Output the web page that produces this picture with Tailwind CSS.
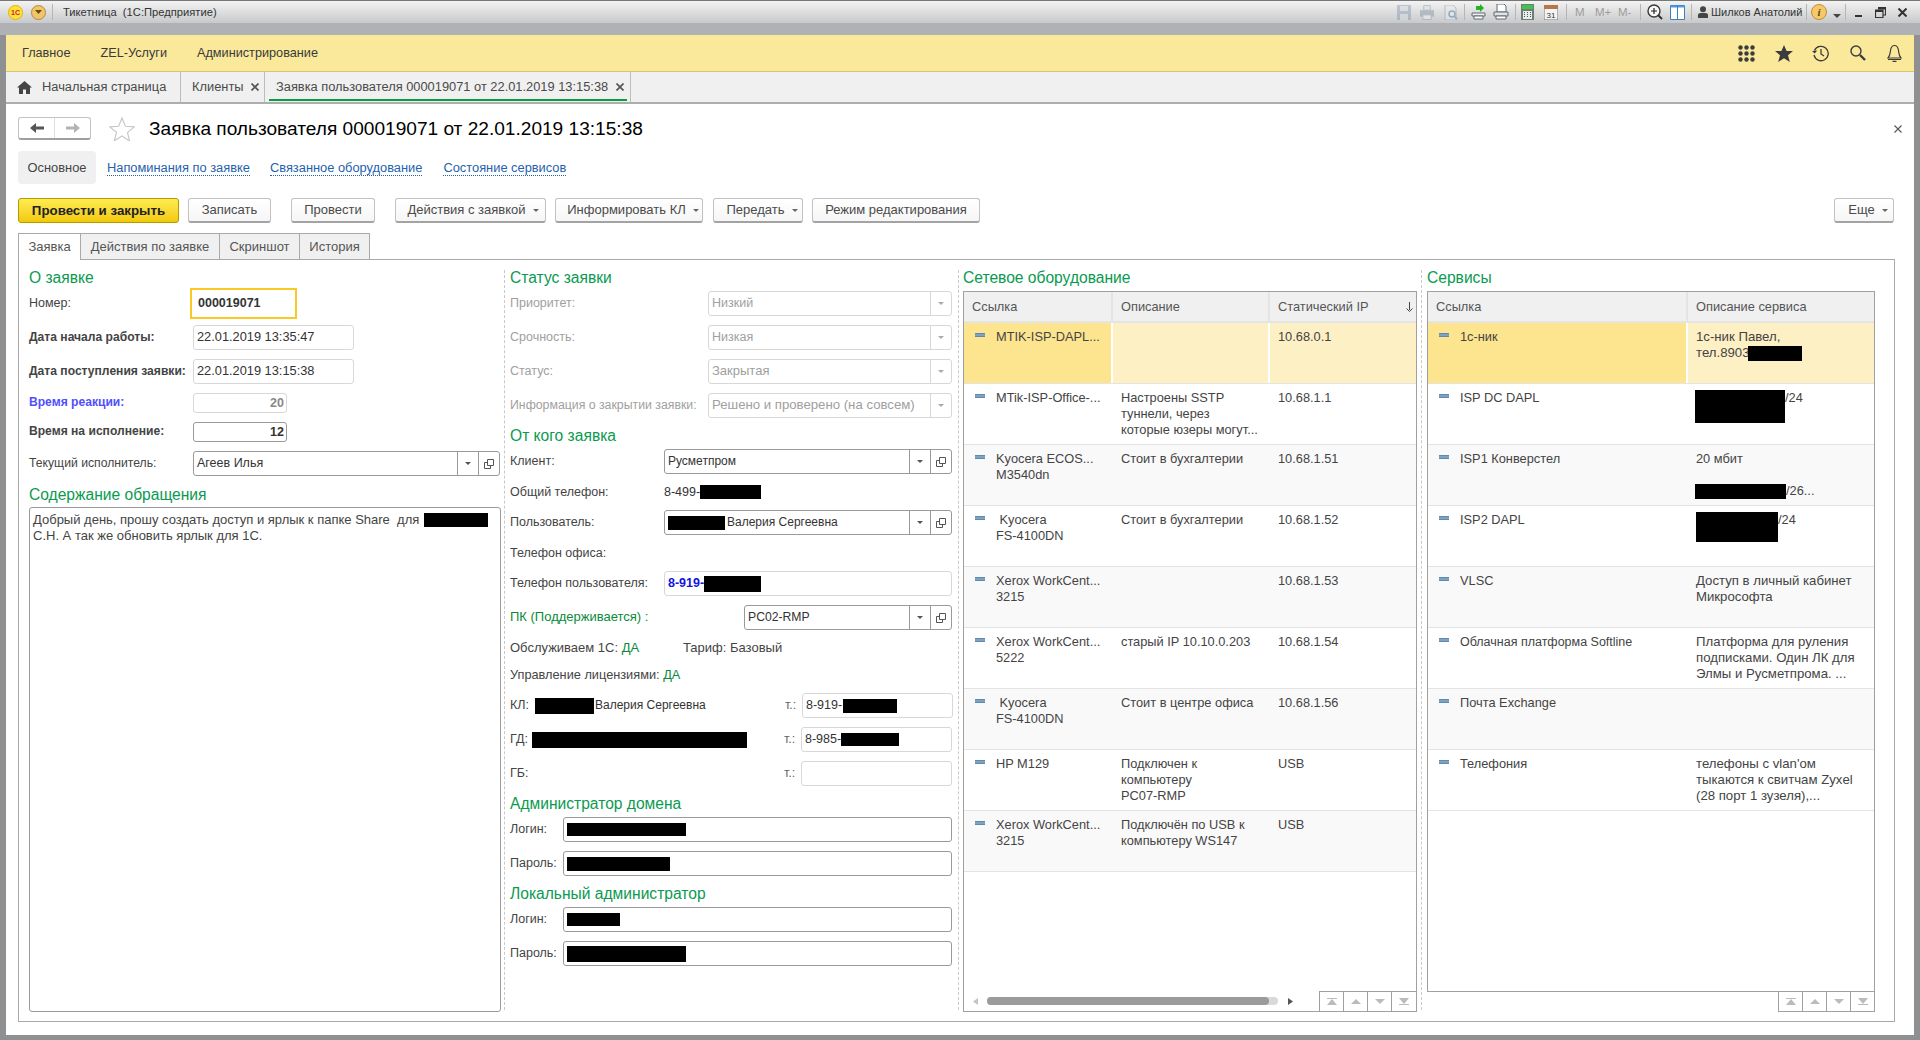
<!DOCTYPE html>
<html lang="ru">
<head>
<meta charset="UTF-8">
<title>Тикетница (1С:Предприятие)</title>
<script src="https://cdn.jsdelivr.net/npm/@tailwindcss/browser@4"></script>
</head>
<body class="w-[1920px] h-[1040px] overflow-hidden bg-[#8f9092] font-['Liberation_Sans',Arial,sans-serif] text-[12.5px] leading-[16px] text-[#444]">

<!-- Window title bar -->
<div class="h-[35px] border-t border-[#777] bg-[#b0b1b4] shrink-0">
  <div class="h-[22px] px-[6px] bg-gradient-to-b from-[#f3f3f3] to-[#c8c9cb] flex items-center text-[#333]">
    <div class="ml-[2px] w-[15px] h-[15px] rounded-full bg-[#ffe23d] border border-[#e2b500] flex items-center justify-center text-[7px] font-bold text-[#d3201f] leading-none">1С</div>
    <div class="ml-[8px] w-[15px] h-[15px] rounded-full bg-[#f0c56c] border border-[#b58a35] flex items-center justify-center">
      <svg width="7" height="4" viewBox="0 0 7 4"><path d="M0 0h7L3.500 4z" fill="#6b4a10"/></svg>
    </div>
    <div class="ml-[6px] w-px h-[16px] bg-[#b5b5b5]"></div>
    <div class="ml-[10px] text-[11.200px] whitespace-pre">Тикетница  (1С:Предприятие)</div>

    <div class="ml-auto flex items-center">
      <svg class="opacity-50" width="14" height="15" viewBox="0 0 14 15"><path d="M0 0h14v15H0z" fill="#8fa1b3"/><path d="M3 1h8v5H3zM3 9h8v6H3z" fill="#cfd8e0"/></svg>
      <svg class="ml-[9px] opacity-50" width="14" height="15" viewBox="0 0 15 15"><path d="M4 0h7v5H4z" fill="#dde3e8" stroke="#8b99a6"/><path d="M0 5h15v7H0z" fill="#8b99a6"/><path d="M3 10h9v5H3z" fill="#eef1f3" stroke="#8b99a6"/></svg>
      <svg class="ml-[10px] opacity-60" width="14" height="15" viewBox="0 0 14 15"><path d="M1 0h8l3 3v12H1z" fill="#e4e9ee" stroke="#93a4b3"/><circle cx="8" cy="9" r="3" fill="none" stroke="#6e8aa0" stroke-width="1.500"/><path d="M10 11l3 3" stroke="#6e8aa0" stroke-width="1.500"/></svg>
      <div class="ml-[6px] w-px h-[16px] bg-[#b5b5b5]"></div>
      <svg class="ml-[6px]" width="15" height="16" viewBox="0 0 15 16"><path d="M5 2h4V0l4 4-4 4V6H5z" fill="#27b224"/><path d="M1 9h13v3H1z" fill="#eef0f2" stroke="#5f6b75"/><path d="M3 12h9v3H3z" fill="#fff" stroke="#5f6b75"/></svg>
      <svg class="ml-[7px]" width="16" height="16" viewBox="0 0 16 16"><path d="M4 0h7l2 2v6H4z" fill="#fff" stroke="#5f6b75"/><path d="M1 8h14v4H1z" fill="#dfe3e6" stroke="#5f6b75"/><path d="M3 12h10v3H3z" fill="#fff" stroke="#5f6b75"/></svg>
      <div class="ml-[6px] w-px h-[16px] bg-[#b5b5b5]"></div>
      <svg class="ml-[5px]" width="13" height="16" viewBox="0 0 13 16"><path d="M0 0h13v16H0z" fill="#6d7f72"/><path d="M1 1h11v4H1z" fill="#3fc44f"/><path d="M2 7h9v8H2z" fill="#e8ecea"/><path d="M3 8h1v1H3zm3 0h1v1H6zm3 0h1v1H9zM3 10h1v1H3zm3 0h1v1H6zm3 0h1v1H9zM3 12h1v1H3zm3 0h1v1H6zm3 0h1v1H9z" fill="#555"/></svg>
      <svg class="ml-[10px]" width="14" height="16" viewBox="0 0 14 16"><path d="M0 2h14v14H0z" fill="#f4f4f4" stroke="#7c6a5a"/><path d="M0 1h14v4H0z" fill="#b5764b"/><text x="7" y="14" font-size="8" text-anchor="middle" fill="#333" font-family="Liberation Sans">31</text></svg>
      <div class="ml-[8px] w-px h-[16px] bg-[#b5b5b5]"></div>
      <span class="ml-[8px] w-[9px] text-[11.500px] text-[#a09c98]">M</span>
      <span class="ml-[11px] w-[16px] text-[11.500px] text-[#a09c98] whitespace-nowrap">M+</span>
      <span class="ml-[7px] w-[15px] text-[11.500px] text-[#a09c98] whitespace-nowrap">M-</span>
      <div class="ml-[7px] w-px h-[16px] bg-[#b5b5b5]"></div>
      <svg class="ml-[6px]" width="16" height="16" viewBox="0 0 16 16"><circle cx="7" cy="7" r="6" fill="#f8f8f8" stroke="#3b3b3b" stroke-width="1.400"/><path d="M4 7h6M7 4v6" stroke="#222" stroke-width="1.200"/><path d="M11 11l4 4" stroke="#333" stroke-width="2"/></svg>
      <svg class="ml-[7px]" width="15" height="15" viewBox="0 0 15 15"><path d="M.5.5h14v14H.5z" fill="#fff" stroke="#3f7fc0"/><path d="M.5.5h14v2H.5z" fill="#4f9ade"/><path d="M7.500 1v14" stroke="#3f7fc0"/></svg>
      <div class="ml-[6px] w-px h-[16px] bg-[#b5b5b5]"></div>
      <svg class="ml-[6px]" width="10" height="12" viewBox="0 0 10 12"><circle cx="5" cy="3.200" r="3" fill="#444"/><path d="M0 12V9q0-2 3-2h4q3 0 3 2v3z" fill="#444"/></svg>
      <span class="ml-[3px] w-[89px] text-[#333] text-[11px] whitespace-nowrap">Шилков Анатолий</span>
      <div class="ml-[6px] w-px h-[16px] bg-[#b5b5b5]"></div>
      <div class="ml-[4px] w-[16px] h-[16px] rounded-full bg-[#f5c86a] border border-[#c48f2e] flex items-center justify-center text-[11px] leading-none font-bold italic text-[#5c4510] font-['Liberation_Serif',serif]">i</div>
      <svg class="ml-[6px] mt-[8px]" width="8" height="4" viewBox="0 0 8 4"><path d="M0 0h8L4 4z" fill="#444"/></svg>
      <div class="ml-[4px] w-px h-[16px] bg-[#b5b5b5]"></div>
      <div class="ml-[9px] mt-[8px] w-[7px] h-[2px] bg-[#333]"></div>
      <svg class="ml-[13px]" width="11" height="11" viewBox="0 0 11 11"><path d="M3 .5h7.500v7.500H8M.5 3H8v7.500H.5z" fill="none" stroke="#333" stroke-width="1.200"/><path d="M.5 3H8v2H.5zM3 .5h7.500v2H3z" fill="#333"/></svg>
      <svg class="ml-[12px] mr-[7px]" width="9" height="9" viewBox="0 0 9 9"><path d="M.5.5l8 8M8.500.5l-8 8" stroke="#333" stroke-width="2"/></svg>
    </div>
  </div>
</div>

<!-- Window frame: content area -->
<div class="ml-[6px] mr-[6px] h-[1000px] flex flex-col bg-white">

  <!-- Sections panel -->
  <div class="h-[37px] bg-[#fbe99b] border-b border-[#d9c66e] flex items-center text-[12.700px] text-[#3a3a3a] shrink-0">
    <span class="ml-[16px]">Главное</span>
    <span class="ml-[30px]">ZEL-Услуги</span>
    <span class="ml-[30px]">Администрирование</span>
    <div class="ml-auto flex items-center">
      <svg width="17" height="17" viewBox="0 0 17 17" fill="#3c3c3c"><circle cx="2.500" cy="2.500" r="2.200"/><circle cx="8.500" cy="2.500" r="2.200"/><circle cx="14.500" cy="2.500" r="2.200"/><circle cx="2.500" cy="8.500" r="2.200"/><circle cx="8.500" cy="8.500" r="2.200"/><circle cx="14.500" cy="8.500" r="2.200"/><circle cx="2.500" cy="14.500" r="2.200"/><circle cx="8.500" cy="14.500" r="2.200"/><circle cx="14.500" cy="14.500" r="2.200"/></svg>
      <svg class="ml-[20px]" width="18" height="17" viewBox="0 0 18 17"><path d="M9 0l2.600 6H18l-5 4.200L14.800 17 9 13.200 3.200 17 5 10.200 0 6h6.400z" fill="#3c3c3c"/></svg>
      <svg class="ml-[19px]" width="17" height="17" viewBox="0 0 17 17" fill="none" stroke="#3c3c3c" stroke-width="1.300"><path d="M2.500 5.500A7.200 7.200 0 1 1 2 10"/><path d="M0 6l2.700 2.500L5.200 5.500" fill="#3c3c3c" stroke="none"/><path d="M9 4v5l3 2"/></svg>
      <svg class="ml-[21px]" width="16" height="16" viewBox="0 0 16 16" fill="none" stroke="#3c3c3c"><circle cx="6" cy="6" r="5" stroke-width="1.400"/><path d="M10 10l5 5" stroke-width="2.400"/></svg>
      <svg class="ml-[21px] mr-[12px]" width="15" height="18" viewBox="0 0 15 18" fill="none" stroke="#3c3c3c" stroke-width="1.200"><path d="M1 14c2-2 2-4 2.500-7.500C4 3 5.500 1.500 7.500 1.500S11 3 11.500 6.500C12 10 12 12 14 14z"/><path d="M1 15.500h13M5.500 17.400h4"/></svg>
    </div>
  </div>

  <!-- Open windows -->
  <div class="h-[32px] bg-[#f0f0f0] border-b-2 border-[#aeaeae] flex items-stretch text-[12.850px] text-[#4a4a4a] shrink-0">
    <div class="w-[175px] flex items-center border-r border-[#bdbdbd]">
      <svg class="ml-[11px]" width="15" height="13" viewBox="0 0 15 13"><path d="M7.500 0L15 6.500h-2V13H9V8.500H6V13H2V6.500H0z" fill="#444"/></svg>
      <span class="ml-[10px] whitespace-nowrap">Начальная страница</span>
    </div>
    <div class="w-[84px] flex items-center border-r border-[#bdbdbd]">
      <span class="ml-[11px]">Клиенты</span>
      <svg class="ml-[7px]" width="8" height="8" viewBox="0 0 8 8"><path d="M.5.5l7 7M7.500.5l-7 7" stroke="#555" stroke-width="1.700"/></svg>
    </div>
    <div class="w-[366px] flex items-center border-r border-[#bdbdbd] relative">
      <span class="ml-[11px] whitespace-nowrap">Заявка пользователя 000019071 от 22.01.2019 13:15:38</span>
      <svg class="ml-[8px]" width="8" height="8" viewBox="0 0 8 8"><path d="M.5.5l7 7M7.500.5l-7 7" stroke="#555" stroke-width="1.700"/></svg>
      <div class="absolute left-[4px] right-[3px] bottom-[1px] h-[2px] bg-[#0c9a45]"></div>
    </div>
  </div>

  <!-- Form -->
  <div class="pl-[12px] pt-[13px] flex flex-col flex-1 min-h-0">
    <div class="h-[23px] flex items-center w-[1884px]">
      <div class="w-[73px] h-[23px] flex border border-[#c3c3c3] border-b-[#9f9f9f] border-b-2 rounded-[3px] bg-white">
        <div class="w-[36px] flex items-center justify-center border-r border-[#dedede]">
          <svg width="14" height="10" viewBox="0 0 14 10"><path d="M0 5l6-5v3.500h8v3H6V10z" fill="#555"/></svg>
        </div>
        <div class="flex-1 flex items-center justify-center">
          <svg width="14" height="10" viewBox="0 0 14 10"><path d="M14 5L8 0v3.500H0v3h8V10z" fill="#b4b4b4"/></svg>
        </div>
      </div>
      <svg class="ml-[18px]" width="26" height="24" viewBox="0 0 26 24"><path d="M13 1l3.400 8.300 8.900.6-6.800 5.700 2.200 8.600L13 19l-7.700 4.800 2.200-8.600L.7 9.900l8.900-.6z" fill="#fff" stroke="#c8c8c8" stroke-width="1.200"/></svg>
      <div class="ml-[14px] text-[19.100px] leading-[24px] text-black whitespace-nowrap">Заявка пользователя 000019071 от 22.01.2019 13:15:38</div>
      <svg class="ml-auto" width="8" height="8" viewBox="0 0 8 8"><path d="M.5.5l7 7M7.500.5l-7 7" stroke="#555" stroke-width="1.100"/></svg>
    </div>

    <div class="mt-[11px] h-[33px] flex items-center text-[12.850px]">
      <div class="w-[78px] h-[33px] bg-[#f0f0f0] rounded-[4px] flex items-center justify-center text-[#444]">Основное</div>
      <a class="ml-[11px] text-[#1f62ad] border-b border-dotted border-[#1f62ad] leading-[15px]">Напоминания по заявке</a>
      <a class="ml-[20px] text-[#1f62ad] border-b border-dotted border-[#1f62ad] leading-[15px]">Связанное оборудование</a>
      <a class="ml-[21px] text-[#1f62ad] border-b border-dotted border-[#1f62ad] leading-[15px]">Состояние сервисов</a>
    </div>

    <!-- Command bar -->
    <div class="mt-[14px] h-[25px] w-[1876px] flex text-[13px] text-[#4a4a4a]">
      <div class="w-[161px] flex items-center justify-center rounded-[3px] border border-[#b39a00] bg-gradient-to-b from-[#ffec4f] to-[#f2c900] font-bold text-[13.300px] text-[#222]">Провести и закрыть</div>
      <div class="ml-[9px] w-[83px] flex items-center justify-center rounded-[3px] border border-[#c2c2c2] border-b-2 border-b-[#a3a3a3] bg-gradient-to-b from-white to-[#f6f6f6]">Записать</div>
      <div class="ml-[20px] w-[84px] flex items-center justify-center rounded-[3px] border border-[#c2c2c2] border-b-2 border-b-[#a3a3a3] bg-gradient-to-b from-white to-[#f6f6f6]">Провести</div>
      <div class="ml-[20px] w-[151px] pl-[5px] flex items-center justify-center gap-[7px] rounded-[3px] border border-[#c2c2c2] border-b-2 border-b-[#a3a3a3] bg-gradient-to-b from-white to-[#f6f6f6]">Действия с заявкой<svg width="6" height="3" viewBox="0 0 6 3"><path d="M0 0h6L3 3z" fill="#666"/></svg></div>
      <div class="ml-[9px] w-[148px] pl-[8px] flex items-center justify-center gap-[7px] rounded-[3px] border border-[#c2c2c2] border-b-2 border-b-[#a3a3a3] bg-gradient-to-b from-white to-[#f6f6f6] whitespace-nowrap">Информировать КЛ<svg width="6" height="3" viewBox="0 0 6 3"><path d="M0 0h6L3 3z" fill="#666"/></svg></div>
      <div class="ml-[10px] w-[90px] pl-[8px] flex items-center justify-center gap-[7px] rounded-[3px] border border-[#c2c2c2] border-b-2 border-b-[#a3a3a3] bg-gradient-to-b from-white to-[#f6f6f6]">Передать<svg width="6" height="3" viewBox="0 0 6 3"><path d="M0 0h6L3 3z" fill="#666"/></svg></div>
      <div class="ml-[9px] w-[168px] flex items-center justify-center rounded-[3px] border border-[#c2c2c2] border-b-2 border-b-[#a3a3a3] bg-gradient-to-b from-white to-[#f6f6f6]">Режим редактирования</div>
      <div class="ml-auto w-[60px] pl-[8px] flex items-center justify-center gap-[7px] rounded-[3px] border border-[#c2c2c2] border-b-2 border-b-[#a3a3a3] bg-gradient-to-b from-white to-[#f6f6f6]">Еще<svg width="6" height="3" viewBox="0 0 6 3"><path d="M0 0h6L3 3z" fill="#666"/></svg></div>
    </div>

    <!-- Form tabs -->
    <div class="mt-[10px] h-[27px] flex text-[13px] text-[#555] relative z-10 -mb-px">
      <div class="w-[63px] bg-white border border-b-0 border-[#a9a9a9] flex items-center justify-center h-[27px]">Заявка</div>
      <div class="w-[139px] bg-[#f0f0f0] border-r border-t border-b border-[#a9a9a9] flex items-center justify-center">Действия по заявке</div>
      <div class="w-[80px] bg-[#f0f0f0] border-r border-t border-b border-[#a9a9a9] flex items-center justify-center">Скриншот</div>
      <div class="w-[70px] bg-[#f0f0f0] border-r border-t border-b border-[#a9a9a9] flex items-center justify-center">История</div>
    </div>

    <!-- Form panel -->
    <div class="w-[1877px] h-[763px] border border-[#a9a9a9] flex items-stretch">

      <!-- О заявке -->
      <div class="w-[486px] pt-[8px] pb-[9px] pl-[10px] flex flex-col relative">
        <div class="text-[15.600px] leading-[20px] text-[#0a9a50]">О заявке</div>
        <div class="flex items-center h-[31px]">
          <span class="w-[161px] relative -top-px">Номер:</span>
          <div class="w-[107px] h-[31px] pb-[2px] border-2 border-[#fbc926] flex items-center pl-[6px] font-bold text-[#333]">000019071</div>
        </div>
        <div class="flex items-center h-[25px] mt-[6px]">
          <span class="w-[164px] relative -top-px text-[12.100px] font-bold whitespace-nowrap">Дата начала работы:</span>
          <div class="w-[161px] h-[25px] pb-[2px] border border-[#d8d8d8] rounded-[3px] flex items-center pl-[3px] text-[12.800px] text-[#333]">22.01.2019 13:35:47</div>
        </div>
        <div class="flex items-center h-[25px] mt-[9px]">
          <span class="w-[164px] relative -top-px text-[12.100px] font-bold whitespace-nowrap">Дата поступления заявки:</span>
          <div class="w-[161px] h-[25px] pb-[2px] border border-[#d8d8d8] rounded-[3px] flex items-center pl-[3px] text-[12.800px] text-[#333]">22.01.2019 13:15:38</div>
        </div>
        <div class="flex items-center h-[20px] mt-[9px]">
          <span class="w-[164px] relative -top-px text-[12.100px] font-bold text-[#4f4fff]">Время реакции:</span>
          <div class="w-[94px] h-[20px] border border-[#d8d8d8] rounded-[3px] flex items-center justify-end pr-[2px] text-[#888] font-bold">20</div>
        </div>
        <div class="flex items-center h-[20px] mt-[9px]">
          <span class="w-[164px] relative -top-px text-[12.100px] font-bold">Время на исполнение:</span>
          <div class="w-[94px] h-[20px] border border-[#9a9a9a] rounded-[3px] flex items-center justify-end pr-[2px] text-[#333] font-bold">12</div>
        </div>
        <div class="flex items-center h-[25px] mt-[9px]">
          <span class="w-[164px] relative -top-px text-[12.200px]">Текущий исполнитель:</span>
          <div class="w-[307px] h-[25px] border border-[#9a9a9a] rounded-[3px] flex items-stretch text-[#333]">
            <span class="flex-1 flex items-center pl-[3px] relative -top-px">Агеев Илья</span>
            <span class="w-[21px] border-l border-[#9a9a9a] flex items-center justify-center"><svg width="6" height="3" viewBox="0 0 6 3"><path d="M0 0h6L3 3z" fill="#555"/></svg></span>
            <span class="w-[21px] border-l border-[#9a9a9a] flex items-center justify-center"><svg width="10" height="10" viewBox="0 0 10 10" fill="none" stroke="#555"><path d="M3.500.5h6v6h-6zM3.500 3.500H.5v6h6V6.500"/></svg></span>
          </div>
        </div>
        <div class="mt-[10px] h-[18px] text-[15.600px] leading-[18px] text-[#0a9a50]">Содержание обращения</div>
        <div class="mt-[3px] w-[472px] flex-1 border border-[#9a9a9a] rounded-[3px] px-[3px] pt-[4px] text-[13px] text-[#444]">
          <div class="flex items-center h-[16px]"><span class="w-[391px] whitespace-pre">Добрый день, прошу создать доступ и ярлык к папке Share  для</span><span class="inline-block w-[64px] h-[14px] bg-black"></span></div>
          <div>С.Н. А так же обновить ярлык для 1С.</div>
        </div>
        <div class="absolute right-0 top-[10px] bottom-[11px] border-r border-dashed border-[#c9c9c9]"></div>
      </div>

      <!-- Статус заявки -->
      <div class="w-[454px] pt-[8px] pl-[5px] flex flex-col relative">
        <div class="text-[15.600px] leading-[20px] h-[20px] text-[#0a9a50]">Статус заявки</div>
        <div class="mt-[3px] flex items-center h-[25px] text-[#a0a0a0]">
          <span class="w-[198px] relative -top-px">Приоритет:</span>
          <div class="w-[244px] h-[25px] border border-[#d8d8d8] rounded-[3px] flex items-stretch"><span class="flex-1 flex items-center pl-[3px] relative -top-px">Низкий</span><span class="w-[21px] border-l border-[#d8d8d8] flex items-center justify-center"><svg width="6" height="3" viewBox="0 0 6 3"><path d="M0 0h6L3 3z" fill="#aaa"/></svg></span></div>
        </div>
        <div class="mt-[9px] flex items-center h-[25px] text-[#a0a0a0]">
          <span class="w-[198px] relative -top-px">Срочность:</span>
          <div class="w-[244px] h-[25px] border border-[#d8d8d8] rounded-[3px] flex items-stretch"><span class="flex-1 flex items-center pl-[3px] relative -top-px">Низкая</span><span class="w-[21px] border-l border-[#d8d8d8] flex items-center justify-center"><svg width="6" height="3" viewBox="0 0 6 3"><path d="M0 0h6L3 3z" fill="#aaa"/></svg></span></div>
        </div>
        <div class="mt-[9px] flex items-center h-[25px] text-[#a0a0a0]">
          <span class="w-[198px] relative -top-px">Статус:</span>
          <div class="w-[244px] h-[25px] border border-[#d8d8d8] rounded-[3px] flex items-stretch"><span class="flex-1 flex items-center pl-[3px] relative -top-px text-[13px]">Закрытая</span><span class="w-[21px] border-l border-[#d8d8d8] flex items-center justify-center"><svg width="6" height="3" viewBox="0 0 6 3"><path d="M0 0h6L3 3z" fill="#aaa"/></svg></span></div>
        </div>
        <div class="mt-[9px] flex items-center h-[25px] text-[#a0a0a0]">
          <span class="w-[198px] relative -top-px text-[12.300px] whitespace-nowrap">Информация о закрытии заявки:</span>
          <div class="w-[244px] h-[25px] border border-[#d8d8d8] rounded-[3px] flex items-stretch"><span class="flex-1 flex items-center pl-[3px] relative -top-px text-[13.200px] whitespace-nowrap">Решено и проверено (на совсем)</span><span class="w-[21px] border-l border-[#d8d8d8] flex items-center justify-center"><svg width="6" height="3" viewBox="0 0 6 3"><path d="M0 0h6L3 3z" fill="#aaa"/></svg></span></div>
        </div>
        <div class="mt-[9px] text-[15.600px] leading-[18px] h-[18px] text-[#0a9a50]">От кого заявка</div>
        <div class="mt-[4px] flex items-center h-[25px]">
          <span class="w-[154px] relative -top-px">Клиент:</span>
          <div class="w-[288px] h-[25px] border border-[#9a9a9a] rounded-[3px] flex items-stretch text-[12px] text-[#333]">
            <span class="flex-1 flex items-center pl-[3px] relative -top-px">Русметпром</span>
            <span class="w-[21px] border-l border-[#9a9a9a] flex items-center justify-center"><svg width="6" height="3" viewBox="0 0 6 3"><path d="M0 0h6L3 3z" fill="#555"/></svg></span>
            <span class="w-[21px] border-l border-[#9a9a9a] flex items-center justify-center"><svg width="10" height="10" viewBox="0 0 10 10" fill="none" stroke="#555"><path d="M3.500.5h6v6h-6zM3.500 3.500H.5v6h6V6.500"/></svg></span>
          </div>
        </div>
        <div class="mt-[9px] flex items-center h-[18px]">
          <span class="w-[154px]">Общий телефон:</span>
          <span class="w-[36px] shrink-0 whitespace-nowrap text-[#333]">8-499-</span><span class="inline-block w-[61px] h-[14px] bg-black"></span>
        </div>
        <div class="mt-[9px] flex items-center h-[25px]">
          <span class="w-[154px] relative -top-px">Пользователь:</span>
          <div class="w-[288px] h-[25px] border border-[#9a9a9a] rounded-[3px] flex items-stretch text-[12px] text-[#333]">
            <span class="flex-1 flex items-center pl-[3px]"><span class="inline-block w-[57px] h-[14px] bg-black mr-[2px]"></span><span class="relative -top-px">Валерия Сергеевна</span></span>
            <span class="w-[21px] border-l border-[#9a9a9a] flex items-center justify-center"><svg width="6" height="3" viewBox="0 0 6 3"><path d="M0 0h6L3 3z" fill="#555"/></svg></span>
            <span class="w-[21px] border-l border-[#9a9a9a] flex items-center justify-center"><svg width="10" height="10" viewBox="0 0 10 10" fill="none" stroke="#555"><path d="M3.500.5h6v6h-6zM3.500 3.500H.5v6h6V6.500"/></svg></span>
          </div>
        </div>
        <div class="mt-[9px] h-[18px] flex items-center">Телефон офиса:</div>
        <div class="mt-[9px] flex items-center h-[25px]">
          <span class="w-[154px] relative -top-px">Телефон пользователя:</span>
          <div class="w-[288px] h-[25px] border border-[#d8d8d8] rounded-[3px] flex items-center pl-[3px] font-bold text-[#1414e0]"><span class="w-[36px] shrink-0 whitespace-nowrap relative -top-px">8-919-</span><span class="inline-block w-[57px] h-[16px] bg-black"></span></div>
        </div>
        <div class="mt-[9px] flex items-center h-[25px]">
          <span class="w-[234px] relative -top-px text-[13px] text-[#0a8a3a]">ПК (Поддерживается) :</span>
          <div class="w-[208px] h-[25px] border border-[#9a9a9a] rounded-[3px] flex items-stretch text-[12.200px] text-[#333]">
            <span class="flex-1 flex items-center pl-[3px] relative -top-px">PC02-RMP</span>
            <span class="w-[21px] border-l border-[#9a9a9a] flex items-center justify-center"><svg width="6" height="3" viewBox="0 0 6 3"><path d="M0 0h6L3 3z" fill="#555"/></svg></span>
            <span class="w-[21px] border-l border-[#9a9a9a] flex items-center justify-center"><svg width="10" height="10" viewBox="0 0 10 10" fill="none" stroke="#555"><path d="M3.500.5h6v6h-6zM3.500 3.500H.5v6h6V6.500"/></svg></span>
          </div>
        </div>
        <div class="mt-[9px] h-[18px] flex items-center text-[13px]">
          <span class="w-[173px]">Обслуживаем 1С: <span class="text-[#0a8a3a]">ДА</span></span>
          <span>Тариф: Базовый</span>
        </div>
        <div class="mt-[9px] h-[18px] flex items-center text-[12.750px]">Управление лицензиями:&nbsp;<span class="text-[#0a8a3a]">ДА</span></div>
        <div class="mt-[9px] flex items-center h-[25px]">
          <span class="w-[25px] relative -top-px">КЛ:</span><span class="inline-block w-[59px] h-[16px] bg-black mr-[1px]"></span><span class="text-[12px] text-[#333] w-[190px] relative -top-px">Валерия Сергеевна</span>
          <span class="w-[17px] relative -top-px text-[#666]">т.:</span>
          <div class="w-[151px] h-[25px] border border-[#d8d8d8] rounded-[3px] flex items-center pl-[3px] text-[#333]"><span class="w-[37px] shrink-0 whitespace-nowrap relative -top-px">8-919-</span><span class="inline-block w-[54px] h-[14px] bg-black"></span></div>
        </div>
        <div class="mt-[9px] flex items-center h-[25px]">
          <span class="w-[22px] relative -top-px">ГД:</span><span class="inline-block w-[215px] h-[16px] bg-black mr-[37px]"></span>
          <span class="w-[17px] relative -top-px text-[#666]">т.:</span>
          <div class="w-[151px] h-[25px] border border-[#d8d8d8] rounded-[3px] flex items-center pl-[3px] text-[#333]"><span class="w-[36px] shrink-0 whitespace-nowrap relative -top-px">8-985-</span><span class="inline-block w-[58px] h-[13px] bg-black"></span></div>
        </div>
        <div class="mt-[9px] flex items-center h-[25px]">
          <span class="w-[274px] relative -top-px">ГБ:</span>
          <span class="w-[17px] relative -top-px text-[#666]">т.:</span>
          <div class="w-[151px] h-[25px] border border-[#d8d8d8] rounded-[3px]"></div>
        </div>
        <div class="mt-[9px] text-[15.600px] leading-[18px] h-[18px] text-[#0a9a50]">Администратор домена</div>
        <div class="mt-[4px] flex items-center h-[25px]">
          <span class="w-[53px] relative -top-px">Логин:</span>
          <div class="w-[389px] h-[25px] border border-[#9a9a9a] rounded-[3px] flex items-center pl-[3px]"><span class="inline-block w-[119px] h-[13px] bg-black"></span></div>
        </div>
        <div class="mt-[9px] flex items-center h-[25px]">
          <span class="w-[53px] relative -top-px">Пароль:</span>
          <div class="w-[389px] h-[25px] border border-[#9a9a9a] rounded-[3px] flex items-center pl-[3px]"><span class="inline-block w-[103px] h-[14px] bg-black"></span></div>
        </div>
        <div class="mt-[9px] text-[15.600px] leading-[18px] h-[18px] text-[#0a9a50]">Локальный администратор</div>
        <div class="mt-[4px] flex items-center h-[25px]">
          <span class="w-[53px] relative -top-px">Логин:</span>
          <div class="w-[389px] h-[25px] border border-[#9a9a9a] rounded-[3px] flex items-center pl-[3px]"><span class="inline-block w-[53px] h-[13px] bg-black"></span></div>
        </div>
        <div class="mt-[9px] flex items-center h-[25px]">
          <span class="w-[53px] relative -top-px">Пароль:</span>
          <div class="w-[389px] h-[25px] border border-[#9a9a9a] rounded-[3px] flex items-center pl-[3px]"><span class="inline-block w-[119px] h-[16px] bg-black"></span></div>
        </div>
        <div class="absolute right-0 top-[10px] bottom-[11px] border-r border-dashed border-[#c9c9c9]"></div>
      </div>

      <!-- Сетевое оборудование -->
      <div class="w-[463px] pt-[8px] pl-[4px] flex flex-col relative text-[12.800px]">
        <div class="text-[15.600px] leading-[20px] h-[20px] text-[#0a9a50]">Сетевое оборудование</div>
        <div class="mt-[3px] w-[454px] h-[721px] border border-[#a0a0a0] flex flex-col text-[#444]">
          <div class="h-[31px] shrink-0 grid grid-cols-[149px_157px_1fr] bg-[#f0f0f0] border-b-2 border-[#e4e4e4] text-[#555]">
            <div class="flex items-center pl-[8px] border-r-2 border-[#e4e4e4]">Ссылка</div>
            <div class="flex items-center pl-[8px] border-r-2 border-[#e4e4e4]">Описание</div>
            <div class="flex items-center justify-between pl-[8px] pr-[3px]">Статический IP<svg width="7" height="10" viewBox="0 0 7 10"><path d="M3.500 0v8M.5 6.500l3 3 3-3" fill="none" stroke="#444"/></svg></div>
          </div>
          <div class="flex-1 min-h-0">
            <div class="h-[61px] grid grid-cols-[149px_157px_1fr] border-b border-[#e4e4e4] bg-[#fef0c5] overflow-hidden">
              <div class="flex items-start pl-[11px] pt-[6px] bg-[#fde48f] border-r-2 border-white"><span class="mt-[4px] w-[10px] h-[4px] bg-[#7ba3c4] border-y border-[#6488a8] shrink-0"></span><span class="ml-[11px] whitespace-nowrap">MTIK-ISP-DAPL...</span></div>
              <div class="pl-[8px] pt-[6px] border-r-2 border-white"></div>
              <div class="pl-[8px] pt-[6px]">10.68.0.1</div>
            </div>
            <div class="h-[61px] grid grid-cols-[149px_157px_1fr] border-b border-[#e4e4e4] bg-white overflow-hidden">
              <div class="flex items-start pl-[11px] pt-[6px]"><span class="mt-[4px] w-[10px] h-[4px] bg-[#7ba3c4] border-y border-[#6488a8] shrink-0"></span><span class="ml-[11px] whitespace-nowrap">MTik-ISP-Office-...</span></div>
              <div class="pl-[8px] pt-[6px] whitespace-nowrap">Настроены SSTP<br>туннели, через<br>которые юзеры могут...</div>
              <div class="pl-[8px] pt-[6px]">10.68.1.1</div>
            </div>
            <div class="h-[61px] grid grid-cols-[149px_157px_1fr] border-b border-[#e4e4e4] bg-[#f9f9f9] overflow-hidden">
              <div class="flex items-start pl-[11px] pt-[6px]"><span class="mt-[4px] w-[10px] h-[4px] bg-[#7ba3c4] border-y border-[#6488a8] shrink-0"></span><span class="ml-[11px] whitespace-nowrap">Kyocera ECOS...<br>M3540dn</span></div>
              <div class="pl-[8px] pt-[6px]">Стоит в бухгалтерии</div>
              <div class="pl-[8px] pt-[6px]">10.68.1.51</div>
            </div>
            <div class="h-[61px] grid grid-cols-[149px_157px_1fr] border-b border-[#e4e4e4] bg-white overflow-hidden">
              <div class="flex items-start pl-[11px] pt-[6px]"><span class="mt-[4px] w-[10px] h-[4px] bg-[#7ba3c4] border-y border-[#6488a8] shrink-0"></span><span class="ml-[11px] whitespace-pre"> Kyocera<br>FS-4100DN</span></div>
              <div class="pl-[8px] pt-[6px]">Стоит в бухгалтерии</div>
              <div class="pl-[8px] pt-[6px]">10.68.1.52</div>
            </div>
            <div class="h-[61px] grid grid-cols-[149px_157px_1fr] border-b border-[#e4e4e4] bg-[#f9f9f9] overflow-hidden">
              <div class="flex items-start pl-[11px] pt-[6px]"><span class="mt-[4px] w-[10px] h-[4px] bg-[#7ba3c4] border-y border-[#6488a8] shrink-0"></span><span class="ml-[11px] whitespace-nowrap">Xerox WorkCent...<br>3215</span></div>
              <div class="pl-[8px] pt-[6px]"></div>
              <div class="pl-[8px] pt-[6px]">10.68.1.53</div>
            </div>
            <div class="h-[61px] grid grid-cols-[149px_157px_1fr] border-b border-[#e4e4e4] bg-white overflow-hidden">
              <div class="flex items-start pl-[11px] pt-[6px]"><span class="mt-[4px] w-[10px] h-[4px] bg-[#7ba3c4] border-y border-[#6488a8] shrink-0"></span><span class="ml-[11px] whitespace-nowrap">Xerox WorkCent...<br>5222</span></div>
              <div class="pl-[8px] pt-[6px]">старый IP 10.10.0.203</div>
              <div class="pl-[8px] pt-[6px]">10.68.1.54</div>
            </div>
            <div class="h-[61px] grid grid-cols-[149px_157px_1fr] border-b border-[#e4e4e4] bg-[#f9f9f9] overflow-hidden">
              <div class="flex items-start pl-[11px] pt-[6px]"><span class="mt-[4px] w-[10px] h-[4px] bg-[#7ba3c4] border-y border-[#6488a8] shrink-0"></span><span class="ml-[11px] whitespace-pre"> Kyocera<br>FS-4100DN</span></div>
              <div class="pl-[8px] pt-[6px]">Стоит в центре офиса</div>
              <div class="pl-[8px] pt-[6px]">10.68.1.56</div>
            </div>
            <div class="h-[61px] grid grid-cols-[149px_157px_1fr] border-b border-[#e4e4e4] bg-white overflow-hidden">
              <div class="flex items-start pl-[11px] pt-[6px]"><span class="mt-[4px] w-[10px] h-[4px] bg-[#7ba3c4] border-y border-[#6488a8] shrink-0"></span><span class="ml-[11px]">HP M129</span></div>
              <div class="pl-[8px] pt-[6px]">Подключен к<br>компьютеру<br>PC07-RMP</div>
              <div class="pl-[8px] pt-[6px]">USB</div>
            </div>
            <div class="h-[61px] grid grid-cols-[149px_157px_1fr] border-b border-[#e4e4e4] bg-[#f9f9f9] overflow-hidden">
              <div class="flex items-start pl-[11px] pt-[6px]"><span class="mt-[4px] w-[10px] h-[4px] bg-[#7ba3c4] border-y border-[#6488a8] shrink-0"></span><span class="ml-[11px] whitespace-nowrap">Xerox WorkCent...<br>3215</span></div>
              <div class="pl-[8px] pt-[6px] whitespace-nowrap">Подключён по USB к<br>компьютеру WS147</div>
              <div class="pl-[8px] pt-[6px]">USB</div>
            </div>
          </div>
          <!-- Scrollbar + row navigation -->
          <div class="h-[20px] shrink-0 flex items-stretch">
            <div class="flex-1 flex items-center">
              <svg class="ml-[9px]" width="5" height="7" viewBox="0 0 5 7"><path d="M5 0v7L0 3.500z" fill="#c4c4c4"/></svg>
              <div class="ml-[9px] w-[291px] h-[8px] rounded-full bg-[#d9d9d9]"><div class="w-[282px] h-[8px] rounded-full bg-[#9b9b9b]"></div></div>
              <svg class="ml-[10px]" width="5" height="7" viewBox="0 0 5 7"><path d="M0 0v7l5-3.500z" fill="#555"/></svg>
            </div>
            <div class="w-[97px] flex border-t border-[#a0a0a0]">
              <div class="w-[24px] border-l border-[#a0a0a0] flex items-center justify-center"><svg width="10" height="7" viewBox="0 0 10 7" fill="#bbb"><path d="M0 0h10v1H0zM5 1l5 6H0z"/></svg></div>
              <div class="w-[24px] border-l border-[#a0a0a0] flex items-center justify-center"><svg width="10" height="5" viewBox="0 0 10 5" fill="#bbb"><path d="M5 0l5 5H0z"/></svg></div>
              <div class="w-[24px] border-l border-[#a0a0a0] flex items-center justify-center"><svg width="10" height="5" viewBox="0 0 10 5" fill="#bbb"><path d="M5 5l5-5H0z"/></svg></div>
              <div class="flex-1 border-l border-[#a0a0a0] flex items-center justify-center"><svg width="10" height="7" viewBox="0 0 10 7" fill="#bbb"><path d="M0 6h10v1H0zM5 6l5-6H0z"/></svg></div>
            </div>
          </div>
        </div>
        <div class="absolute right-0 top-[10px] bottom-[11px] border-r border-dashed border-[#c9c9c9]"></div>
      </div>

      <!-- Сервисы -->
      <div class="flex-1 pt-[8px] pl-[5px] flex flex-col text-[12.800px]">
        <div class="text-[15.600px] leading-[20px] h-[20px] text-[#0a9a50]">Сервисы</div>
        <div class="mt-[3px] w-[448px] h-[701px] border border-[#a0a0a0] flex flex-col text-[#444]">
          <div class="h-[31px] shrink-0 grid grid-cols-[260px_1fr] bg-[#f0f0f0] border-b-2 border-[#e4e4e4] text-[#555]">
            <div class="flex items-center pl-[8px] border-r-2 border-[#e4e4e4]">Ссылка</div>
            <div class="flex items-center pl-[8px]">Описание сервиса</div>
          </div>
          <div class="h-[61px] grid grid-cols-[260px_1fr] border-b border-[#e4e4e4] bg-[#fef0c5] overflow-hidden">
            <div class="flex items-start pl-[11px] pt-[6px] bg-[#fde48f] border-r-2 border-white"><span class="mt-[4px] w-[10px] h-[4px] bg-[#7ba3c4] border-y border-[#6488a8] shrink-0"></span><span class="ml-[11px]">1с-ник</span></div>
            <div class="pl-[8px] pt-[6px] text-[13.200px]">1с-ник Павел,<br><span class="flex items-center"><span class="w-[52px] shrink-0 whitespace-nowrap">тел.8903</span><span class="inline-block w-[54px] h-[15px] bg-black"></span></span></div>
          </div>
          <div class="h-[61px] grid grid-cols-[260px_1fr] border-b border-[#e4e4e4] bg-white overflow-hidden">
            <div class="flex items-start pl-[11px] pt-[6px]"><span class="mt-[4px] w-[10px] h-[4px] bg-[#7ba3c4] border-y border-[#6488a8] shrink-0"></span><span class="ml-[11px]">ISP DC DAPL</span></div>
            <div class="pl-[7px] pt-[6px] flex items-start"><span class="inline-block w-[90px] h-[33px] bg-black"></span>/24</div>
          </div>
          <div class="h-[61px] grid grid-cols-[260px_1fr] border-b border-[#e4e4e4] bg-[#f9f9f9] overflow-hidden">
            <div class="flex items-start pl-[11px] pt-[6px]"><span class="mt-[4px] w-[10px] h-[4px] bg-[#7ba3c4] border-y border-[#6488a8] shrink-0"></span><span class="ml-[11px]">ISP1 Конверстел</span></div>
            <div class="pl-[8px] pt-[6px]">20 мбит<div class="mt-[16px] -ml-[1px] flex items-center"><span class="inline-block w-[91px] h-[15px] bg-black"></span>/26...</div></div>
          </div>
          <div class="h-[61px] grid grid-cols-[260px_1fr] border-b border-[#e4e4e4] bg-white overflow-hidden">
            <div class="flex items-start pl-[11px] pt-[6px]"><span class="mt-[4px] w-[10px] h-[4px] bg-[#7ba3c4] border-y border-[#6488a8] shrink-0"></span><span class="ml-[11px]">ISP2 DAPL</span></div>
            <div class="pl-[8px] pt-[6px] flex items-start"><span class="inline-block w-[82px] h-[30px] bg-black"></span>/24</div>
          </div>
          <div class="h-[61px] grid grid-cols-[260px_1fr] border-b border-[#e4e4e4] bg-[#f9f9f9] overflow-hidden">
            <div class="flex items-start pl-[11px] pt-[6px]"><span class="mt-[4px] w-[10px] h-[4px] bg-[#7ba3c4] border-y border-[#6488a8] shrink-0"></span><span class="ml-[11px]">VLSC</span></div>
            <div class="pl-[8px] pt-[6px] text-[13.200px] whitespace-nowrap">Доступ в личный кабинет<br>Микрософта</div>
          </div>
          <div class="h-[61px] grid grid-cols-[260px_1fr] border-b border-[#e4e4e4] bg-white overflow-hidden">
            <div class="flex items-start pl-[11px] pt-[6px]"><span class="mt-[4px] w-[10px] h-[4px] bg-[#7ba3c4] border-y border-[#6488a8] shrink-0"></span><span class="ml-[11px] text-[12.500px] whitespace-nowrap">Облачная платформа Softline</span></div>
            <div class="pl-[8px] pt-[6px] text-[13.200px] whitespace-nowrap">Платформа для руления<br>подписками. Один ЛК для<br>Элмы и Русметпрома. ...</div>
          </div>
          <div class="h-[61px] grid grid-cols-[260px_1fr] border-b border-[#e4e4e4] bg-[#f9f9f9] overflow-hidden">
            <div class="flex items-start pl-[11px] pt-[6px]"><span class="mt-[4px] w-[10px] h-[4px] bg-[#7ba3c4] border-y border-[#6488a8] shrink-0"></span><span class="ml-[11px]">Почта Exchange</span></div>
            <div class="pl-[8px] pt-[6px]"></div>
          </div>
          <div class="h-[61px] grid grid-cols-[260px_1fr] border-b border-[#e4e4e4] bg-white overflow-hidden">
            <div class="flex items-start pl-[11px] pt-[6px]"><span class="mt-[4px] w-[10px] h-[4px] bg-[#7ba3c4] border-y border-[#6488a8] shrink-0"></span><span class="ml-[11px]">Телефония</span></div>
            <div class="pl-[8px] pt-[6px] text-[13.200px] whitespace-nowrap">телефоны с vlan'ом<br>тыкаются к свитчам Zyxel<br>(28 порт 1 зузеля),...</div>
          </div>
        </div>
        <div class="w-[448px] flex justify-end">
          <div class="w-[97px] h-[20px] flex border-b border-r border-[#a0a0a0]">
            <div class="w-[24px] border-l border-[#a0a0a0] flex items-center justify-center"><svg width="10" height="7" viewBox="0 0 10 7" fill="#bbb"><path d="M0 0h10v1H0zM5 1l5 6H0z"/></svg></div>
            <div class="w-[24px] border-l border-[#a0a0a0] flex items-center justify-center"><svg width="10" height="5" viewBox="0 0 10 5" fill="#bbb"><path d="M5 0l5 5H0z"/></svg></div>
            <div class="w-[24px] border-l border-[#a0a0a0] flex items-center justify-center"><svg width="10" height="5" viewBox="0 0 10 5" fill="#bbb"><path d="M5 5l5-5H0z"/></svg></div>
            <div class="flex-1 border-l border-[#a0a0a0] flex items-center justify-center"><svg width="10" height="7" viewBox="0 0 10 7" fill="#bbb"><path d="M0 6h10v1H0zM5 6l5-6H0z"/></svg></div>
          </div>
        </div>
      </div>

    </div>
  </div>
</div>
</body>
</html>
